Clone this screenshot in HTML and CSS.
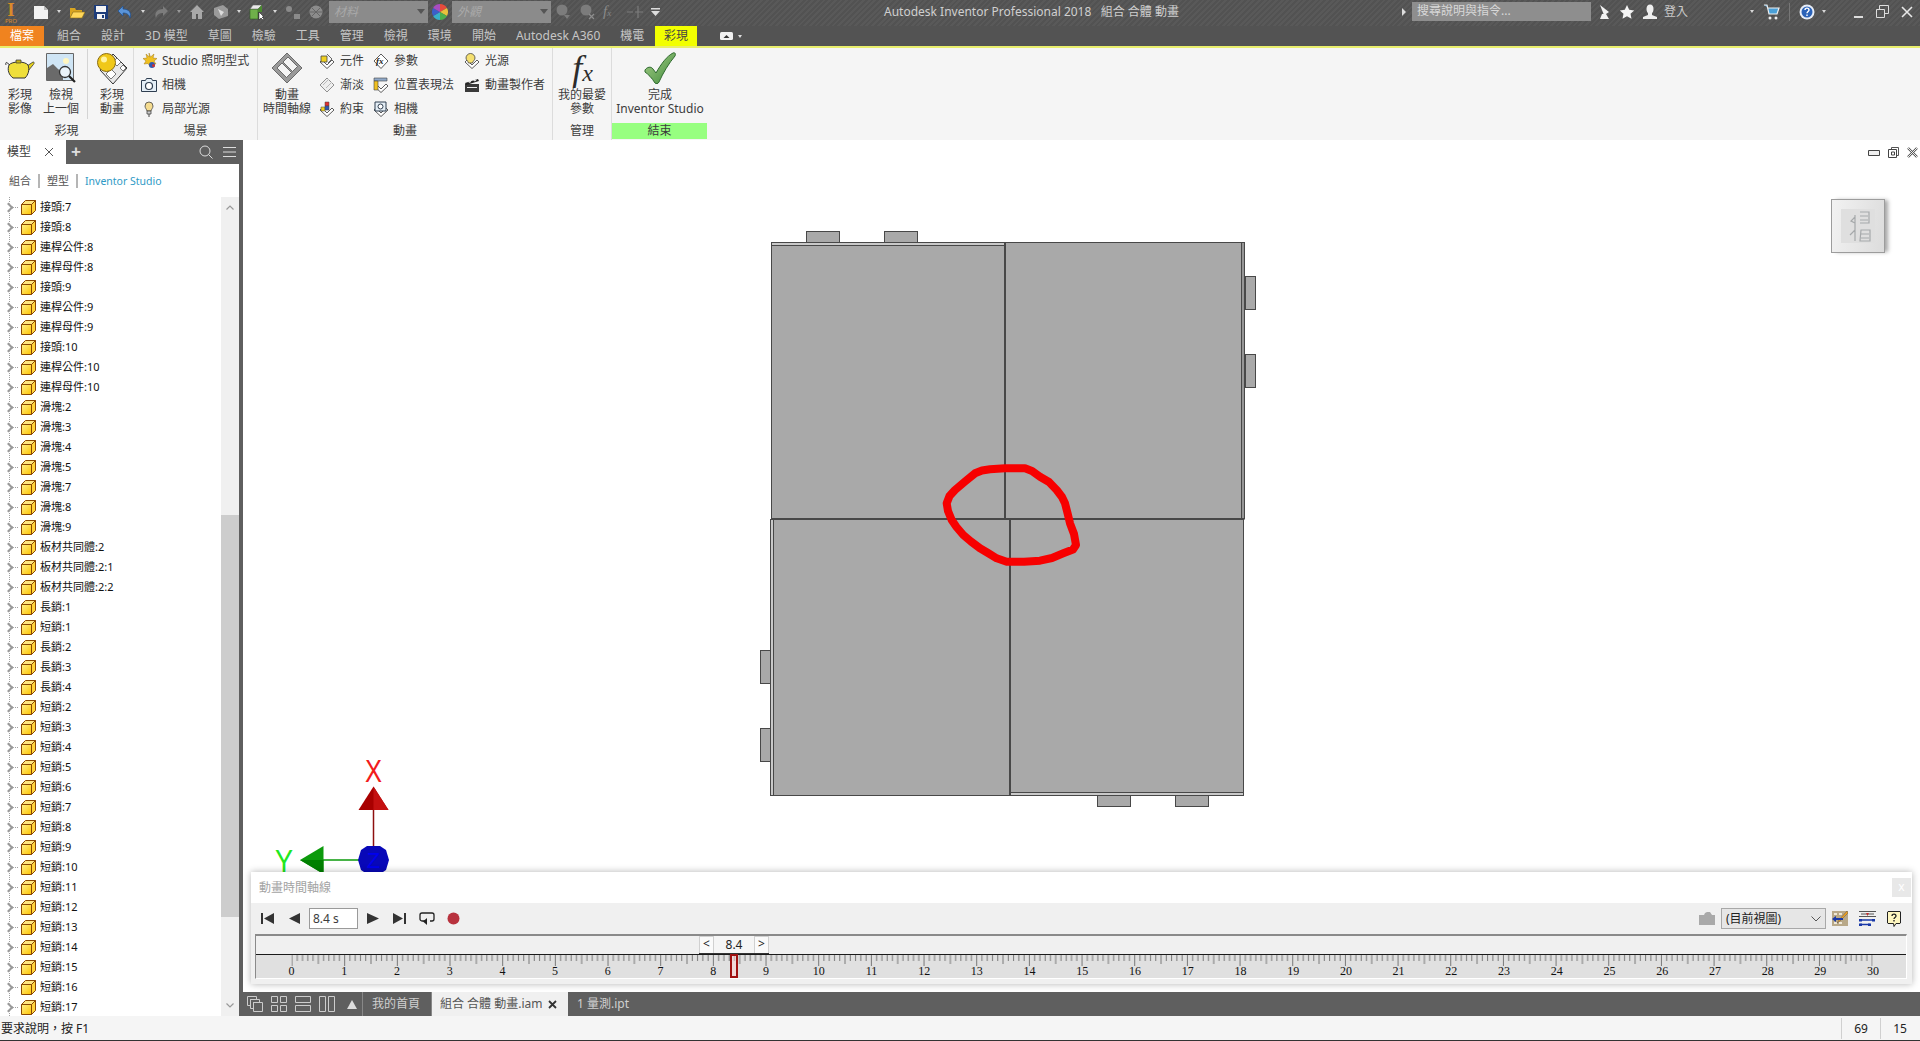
FILE: index.html
```html
<!DOCTYPE html>
<html lang="zh-Hant">
<head>
    <meta charset="UTF-8">
    <title>Autodesk Inventor Professional 2018</title>
    <link rel="stylesheet" href="styles.css">
</head>
<body>

    <svg class="defs" width="0" height="0">
        <defs>
            <linearGradient id="partFront" x1="0" y1="0" x2="1" y2="1">
                <stop offset="0" stop-color="#fff08a"/>
                <stop offset="1" stop-color="#ffc400"/>
            </linearGradient>
            <symbol id="part" viewBox="0 0 16 16">
                <path d="M1.5 5.5h10v10h-10z" fill="url(#partFront)" stroke="#8a4600"/>
                <path d="M1.5 5.5l4-4h10l-4 4z" fill="#ffe680" stroke="#8a4600"/>
                <path d="M11.5 5.5l4-4v10l-4 4z" fill="#ffd23c" stroke="#8a4600"/>
            </symbol>
            <symbol id="tag" viewBox="0 0 16 16">
                <path d="M8 15.5L1 9l2-2 5 5 5-5 2 2z" fill="#fff" stroke="#333" stroke-width=".8"/>
            </symbol>
        </defs>
    </svg>

    <header class="titlebar">
        <div class="logo"><span class="logo-i">I</span><span class="logo-pro">PRO</span></div>
        <div class="qat">
            <svg class="qat-icon" viewBox="0 0 16 16"><path d="M1 2h10l4 4v9H1z" fill="#f2f2f2"/><path d="M11 2v4h4z" fill="#bbb"/></svg>
            <i class="arrow"></i>
            <svg class="qat-icon" viewBox="0 0 16 16"><path d="M1 4h5l1 2h6v2H4L1 14z" fill="#d9a520"/><path d="M4 8h12l-3 6H1z" fill="#ffd75a" stroke="#8a6a10" stroke-width=".6"/></svg>
            <svg class="qat-icon" viewBox="0 0 16 16"><path d="M1 1h14v14H1z" fill="#1d3c7a"/><path d="M3 2h10v6H3z" fill="#f4f4f4"/><path d="M4 10h8v5H4z" fill="#f4f4f4"/><path d="M9 11h2v3H9z" fill="#1d3c7a"/></svg>
            <svg class="qat-icon" viewBox="0 0 16 16"><path d="M6 2L1 7l5 5V9c3 0 6 1 7 5 2-5-1-9-7-9z" fill="#5a94d8" stroke="#1c4f90" stroke-width=".7"/></svg>
            <i class="arrow"></i>
            <svg class="qat-icon" viewBox="0 0 16 16"><path d="M10 2l5 5-5 5V9c-3 0-6 1-7 5-2-5 1-9 7-9z" fill="#7c7c7c"/></svg>
            <i class="arrow arrow-dim"></i>
            <svg class="qat-icon" viewBox="0 0 16 16"><path d="M8 1l7 7h-2v7H9v-5H7v5H3V8H1z" fill="#a8a8a8"/></svg>
            <svg class="qat-icon" viewBox="0 0 16 16"><path d="M1 4l9-3 5 4v7l-9 3-5-4z" fill="#9a9a9a"/><path d="M5 5l6 3-3 4z" fill="#dcdcdc"/></svg>
            <i class="arrow"></i>
            <svg class="qat-icon" viewBox="0 0 16 16"><path d="M1 5h8v10H1z" fill="#6fb04a" stroke="#2d5f20" stroke-width=".6"/><path d="M1 5l3-4h9L9 5z" fill="#e9e9e9" stroke="#555" stroke-width=".5"/><path d="M9 5l4-4v7H9z" fill="#4b8a30"/><path d="M10 8v8l2-2 2 2 1-1-2-2h2z" fill="#fff" stroke="#111" stroke-width=".5"/></svg>
            <i class="arrow"></i>
            <svg class="qat-icon" viewBox="0 0 16 16"><circle cx="4" cy="5" r="3" fill="#8a8a8a"/><path d="M9 10h6v5H9z" fill="#8a8a8a"/></svg>
            <svg class="qat-icon" viewBox="0 0 16 16"><circle cx="7" cy="8" r="6.500" fill="#8c8c8c"/><path d="M3 4l8 8M11 4l-8 8M1 8h12" stroke="#666"/></svg>
            <div class="combo">材料<i class="arrow arrow-dark"></i></div>
            <svg class="qat-icon wheel" viewBox="0 0 16 16"><path d="M8 8V0a8 8 0 0 1 6.9 4z" fill="#e84b3c"/><path d="M8 8l6.9-4a8 8 0 0 1 0 8z" fill="#e8c23c"/><path d="M8 8l6.9 4A8 8 0 0 1 8 16z" fill="#4cae4c"/><path d="M8 8v8a8 8 0 0 1-6.900-4z" fill="#38b0c8"/><path d="M8 8l-6.900 4a8 8 0 0 1 0-8z" fill="#3b5fc8"/><path d="M8 8L1.100 4A8 8 0 0 1 8 0z" fill="#a84cc0"/></svg>
            <div class="combo">外觀<i class="arrow arrow-dark"></i></div>
            <svg class="qat-icon" viewBox="0 0 16 16"><circle cx="7" cy="6" r="5.500" fill="#7c7c7c"/><path d="M9 11h6l-3 4z" fill="#7c7c7c"/></svg>
            <svg class="qat-icon" viewBox="0 0 16 16"><circle cx="7" cy="6" r="5.500" fill="#7c7c7c"/><path d="M10 10l5 5M15 10l-5 5" stroke="#8e8e8e" stroke-width="1.200"/></svg>
            <span class="qat-fx">f<small>x</small></span>
            <svg class="qat-icon" viewBox="0 0 16 16"><path d="M0 8h6M11 2v12M8 8h8" stroke="#7c7c7c" stroke-width="1.200"/></svg>
            <svg class="qat-more" viewBox="0 0 9 8"><path d="M0 0h9v1.500H0zM0 3h9L4.500 8z" fill="#ddd"/></svg>
        </div>
        <div class="app-title">Autodesk Inventor Professional 2018&nbsp;&nbsp; 組合 合體 動畫</div>
        <div class="title-right">
            <i class="arrow-right"></i>
            <div class="search">搜尋說明與指令...</div>
            <svg class="qat-icon" viewBox="0 0 16 16"><path d="M4 1l9 7-3 2-2 1z" fill="#f2f2f2"/><path d="M6 10l-2 5h9l-3-5z" fill="#f2f2f2"/></svg>
            <svg class="qat-icon" viewBox="0 0 16 16"><path d="M8 1l2.200 4.800 5 .6-3.700 3.400 1 5L8 12.300 3.500 14.800l1-5L.8 6.400l5-.6z" fill="#f4f4f4"/></svg>
            <svg class="qat-icon" viewBox="0 0 16 16"><ellipse cx="8" cy="5" rx="3.500" ry="4.500" fill="#eee"/><path d="M6 9h4v2l5 2v2H1v-2l5-2z" fill="#eee"/></svg>
            <span class="signin">登入</span>
            <i class="arrow arrow-signin"></i>
            <svg class="qat-icon" viewBox="0 0 16 16"><path d="M0 1h3l2 9h8l2-6H4" fill="#4aa0d8" stroke="#eee" stroke-width="1.200"/><circle cx="6" cy="14" r="1.500" fill="#eee"/><circle cx="12" cy="14" r="1.500" fill="#eee"/></svg>
            <i class="title-sep"></i>
            <svg class="qat-icon" viewBox="0 0 16 16"><circle cx="8" cy="8" r="7.500" fill="#e8eef8"/><circle cx="8" cy="8" r="5.500" fill="#2a62b8"/><path d="M6 6c0-2.500 4-2.500 4 0 0 1.500-2 1.500-2 3.300" fill="none" stroke="#fff" stroke-width="1.400"/><path d="M7.300 10.500h1.400V12H7.300z" fill="#fff"/></svg>
            <i class="arrow arrow-help"></i>
            <div class="window-btns">
                <svg width="10" height="12" viewBox="0 0 10 12"><path d="M0 10h9v2H0z" fill="#ddd"/></svg>
                <svg width="13" height="13" viewBox="0 0 13 13"><path d="M.5 4.500h8v8h-8zM3.500 4.500v-4h9v8h-4" fill="none" stroke="#ddd"/></svg>
                <svg width="12" height="12" viewBox="0 0 12 12"><path d="M1 1l10 10M11 1L1 11" stroke="#e8e8e8" stroke-width="1.600"/></svg>
            </div>
        </div>
    </header>

    <nav class="tabbar">
        <a class="tab-file">檔案</a>
        <div class="tabs">
            <a>組合</a><a>設計</a><a>3D 模型</a><a>草圖</a><a>檢驗</a><a>工具</a><a>管理</a><a>檢視</a><a>環境</a><a>開始</a><a>Autodesk A360</a><a>機電</a>
        </div>
        <a class="tab-render">彩現</a>
        <svg class="tab-extra" viewBox="0 0 22 8"><rect width="13" height="8" rx="1.500" fill="#f0f0f0"/><path d="M3.500 6l3-3 3 3z" fill="#333"/><path d="M18 3h4l-2 3z" fill="#ddd"/></svg>
    </nav>

    <section class="ribbon">
        <div class="panel panel-render">
            <div class="panel-body">
                <div class="big-btn">
                    <div class="big-icon"><svg width="30" height="22" viewBox="0 0 30 22"><path d="M5 9C2 4 0 5 1 8" fill="none" stroke="#333" stroke-width="1"/><path d="M22 9l6-4c2 0 1 2 0 3l-5 6z" fill="#e6d21c" stroke="#333" stroke-width=".8"/><path d="M4 8c3-4 16-4 19 0 2 5 0 10-3 13H8C4 18 2 13 4 8z" fill="#efdf3a" stroke="#333"/><path d="M11 3h5v3h-5z" fill="#c7b51a" stroke="#333" stroke-width=".7"/></svg></div>
                    <span>彩現<br>影像</span>
                </div>
                <div class="big-btn">
                    <div class="big-icon"><svg width="30" height="30" viewBox="0 0 30 30"><path d="M.5.500h27v27H.5z" fill="#cfe5f5" stroke="#666"/><circle cx="20" cy="8" r="3" fill="#fff6c0"/><path d="M1 27V15l6-4 5 5 5 4v7z" fill="#6a6a6a"/><circle cx="19" cy="19" r="5.500" fill="#e9f3fa" stroke="#333" stroke-width="1.300"/><path d="M23 23l6 6" stroke="#222" stroke-width="2.200"/></svg></div>
                    <span>檢視<br>上一個</span>
                </div>
                <i class="panel-sep"></i>
                <div class="big-btn">
                    <div class="big-icon"><svg width="30" height="31" viewBox="0 0 30 31"><path d="M16 1l14 14-14 16L3 17z" fill="#e8e8e8" stroke="#333"/><path d="M9 21l5 5 5-5-5-5zM16 9l4 4 4-4-4-4zM23 15l3 3 3-3-3-3z" fill="#fff" stroke="#444" stroke-width=".7"/><circle cx="9.500" cy="9.500" r="9" fill="#f0c818" stroke="#8a6c10"/><circle cx="7" cy="6.500" r="3" fill="#fff3a0"/></svg></div>
                    <span>彩現<br>動畫</span>
                </div>
            </div>
            <div class="panel-label">彩現</div>
        </div>

        <div class="panel panel-scene">
            <div class="panel-body">
                <div class="small-col">
                    <div class="small-btn">
                        <svg width="16" height="16" viewBox="0 0 16 16"><path d="M8 0l1.500 4L13 1l-1 4 4 .5-3 2.500 2 3-4-.5-2 3-2-3-4 .5 2-3-3-2.500 4-.5-1-4 3.500 3z" fill="#f0c020" stroke="#a47a10" stroke-width=".5"/><circle cx="11" cy="12" r="3" fill="#3058b0"/><circle cx="12.500" cy="12.500" r="1.500" fill="#d03030"/></svg>
                        Studio 照明型式
                    </div>
                    <div class="small-btn">
                        <svg width="16" height="16" viewBox="0 0 16 16"><path d="M.5 3.500h4l1-2h5l1 2h4v11H.5z" fill="#e4eef6" stroke="#2f3e50"/><circle cx="8" cy="9" r="3.500" fill="#fff" stroke="#2f3e50" stroke-width="1.200"/></svg>
                        相機
                    </div>
                    <div class="small-btn">
                        <svg width="16" height="16" viewBox="0 0 16 16"><path d="M4 5a4 4 0 0 1 8 0c0 2-1.500 3-2 5H6c-.5-2-2-3-2-5z" fill="#f5dc90" stroke="#444" stroke-width=".8"/><path d="M6 10h4v3H6z" fill="#ccc" stroke="#444" stroke-width=".8"/><path d="M7.500 13h1v3h-1z" fill="#444"/></svg>
                        局部光源
                    </div>
                </div>
            </div>
            <div class="panel-label">場景</div>
        </div>

        <div class="panel panel-anim">
            <div class="panel-body">
                <div class="big-btn big-timeline">
                    <div class="big-icon"><svg width="30" height="30" viewBox="0 0 30 30"><path d="M15 0l15 15-15 15L0 15z" fill="#9a9a9a" stroke="#444" stroke-width=".7"/><path d="M16 4l9.500 9.500-5 5L11 9zM10 10l9.500 9.500-5 5L5 15z" fill="#f4f4f4" stroke="#444" stroke-width=".7"/></svg></div>
                    <span>動畫<br>時間軸線</span>
                </div>
                <div class="small-col col-part">
                    <div class="small-btn">
                        <svg width="16" height="16" viewBox="0 0 16 16"><use href="#tag"/><path d="M2 3h6v6H2z" fill="#f0d020" stroke="#444" stroke-width=".8"/><path d="M8 1l5 5-4 4" fill="none" stroke="#444" stroke-width=".8"/></svg>
                        元件
                    </div>
                    <div class="small-btn">
                        <svg width="16" height="16" viewBox="0 0 16 16"><path d="M8 15L1 8l7-7 7 7z" fill="#eee" stroke="#777" stroke-width=".8"/><path d="M4 8l6-6M7 11l6-6" stroke="#bbb"/></svg>
                        漸淡
                    </div>
                    <div class="small-btn">
                        <svg width="16" height="16" viewBox="0 0 16 16"><use href="#tag"/><path d="M6 1h4v4H6z" fill="#e03030" stroke="#444" stroke-width=".5"/><path d="M2 6h4v4H2z" fill="#f0d020" stroke="#444" stroke-width=".5"/><path d="M6 5h4v4H6z" fill="#3058b0" stroke="#444" stroke-width=".5"/></svg>
                        約束
                    </div>
                </div>
                <div class="small-col col-param">
                    <div class="small-btn">
                        <svg width="16" height="16" viewBox="0 0 16 16"><path d="M8 15.500L1 8l7-7 7 7z" fill="#fff" stroke="#333" stroke-width=".8"/><text x="3" y="11" class="icon-fx">fx</text></svg>
                        參數
                    </div>
                    <div class="small-btn">
                        <svg width="16" height="16" viewBox="0 0 16 16"><use href="#tag"/><path d="M1 1h13v3H1z" fill="#8fa8c8" stroke="#444" stroke-width=".6"/><path d="M1 4h4v9H1z" fill="#f0c020" stroke="#444" stroke-width=".6"/></svg>
                        位置表現法
                    </div>
                    <div class="small-btn">
                        <svg width="16" height="16" viewBox="0 0 16 16"><use href="#tag"/><path d="M2 1h11v9H2z" fill="#e4eef6" stroke="#2f3e50"/><circle cx="7.500" cy="5.500" r="2.500" fill="#fff" stroke="#2f3e50"/></svg>
                        相機
                    </div>
                </div>
                <div class="small-col col-light">
                    <div class="small-btn">
                        <svg width="16" height="16" viewBox="0 0 16 16"><use href="#tag"/><path d="M2 5a4.500 4.500 0 0 1 9 0c0 2-2 3-2.500 5h-4C4 8 2 7 2 5z" fill="#f5e070" stroke="#444" stroke-width=".8"/></svg>
                        光源
                    </div>
                    <div class="small-btn">
                        <svg width="16" height="16" viewBox="0 0 16 16"><path d="M1 7h14v8H1z" fill="#3a3a3a"/><path d="M1 6l13-4 1 2L2 8z" fill="#222"/><path d="M4 5l2 1 2-3-2 1zM9 3.500l2 1 2-2-2 .5zM3 10h10v1H3z" fill="#eee"/></svg>
                        動畫製作者
                    </div>
                </div>
            </div>
            <div class="panel-label">動畫</div>
        </div>

        <div class="panel panel-manage">
            <div class="panel-body">
                <div class="big-btn big-wide">
                    <div class="big-icon big-fx"><span>f</span><span class="fx-x">x</span></div>
                    <span>我的最愛<br>參數</span>
                </div>
            </div>
            <div class="panel-label">管理</div>
        </div>

        <div class="panel panel-finish">
            <div class="panel-body">
                <div class="big-btn big-wide">
                    <div class="big-icon">
                        <svg width="32" height="32" viewBox="0 0 32 32">
                            <defs><linearGradient id="checkFill" x1="0" y1="0" x2="1" y2="1"><stop offset="0" stop-color="#a9d08a"/><stop offset="1" stop-color="#3f8a3a"/></linearGradient></defs>
                            <path d="M1 18c2-3 6-4 8-1l3 4C17 12 23 4 29 1c2-1 3 1 2 3-6 7-12 17-16 26-1 2-3 2-4 1-3-5-7-9-10-11z" fill="url(#checkFill)" stroke="#2f6a2f"/>
                        </svg>
                    </div>
                    <span>完成<br>Inventor Studio</span>
                </div>
            </div>
            <div class="panel-label label-finish">結束</div>
        </div>
        <div class="ribbon-rest"></div>
    </section>

    <div class="workspace">
        <aside class="browser">
            <div class="browser-head">
                <div class="browser-title">模型 <svg width="10" height="10" viewBox="0 0 10 10"><path d="M1 1l8 8M9 1L1 9" stroke="#555"/></svg></div>
                <div class="browser-bar">
                    <span class="browser-plus">+</span>
                    <svg class="browser-search" width="14" height="14" viewBox="0 0 14 14"><circle cx="6" cy="6" r="5" fill="none" stroke="#ddd"/><path d="M9.500 9.500l4 4" stroke="#ddd"/></svg>
                    <svg width="13" height="10" viewBox="0 0 13 10"><path d="M0 .5h13M0 5h13M0 9.500h13" stroke="#ddd"/></svg>
                </div>
            </div>
            <div class="browser-sub">
                <span>組合</span><i></i><span>塑型</span><i></i><span class="sub-active">Inventor Studio</span>
            </div>
            <div class="browser-tree">
                <ul class="tree">
                    <li><svg class="part"><use href="#part"/></svg>接頭:7</li>
                    <li><svg class="part"><use href="#part"/></svg>接頭:8</li>
                    <li><svg class="part"><use href="#part"/></svg>連桿公件:8</li>
                    <li><svg class="part"><use href="#part"/></svg>連桿母件:8</li>
                    <li><svg class="part"><use href="#part"/></svg>接頭:9</li>
                    <li><svg class="part"><use href="#part"/></svg>連桿公件:9</li>
                    <li><svg class="part"><use href="#part"/></svg>連桿母件:9</li>
                    <li><svg class="part"><use href="#part"/></svg>接頭:10</li>
                    <li><svg class="part"><use href="#part"/></svg>連桿公件:10</li>
                    <li><svg class="part"><use href="#part"/></svg>連桿母件:10</li>
                    <li><svg class="part"><use href="#part"/></svg>滑塊:2</li>
                    <li><svg class="part"><use href="#part"/></svg>滑塊:3</li>
                    <li><svg class="part"><use href="#part"/></svg>滑塊:4</li>
                    <li><svg class="part"><use href="#part"/></svg>滑塊:5</li>
                    <li><svg class="part"><use href="#part"/></svg>滑塊:7</li>
                    <li><svg class="part"><use href="#part"/></svg>滑塊:8</li>
                    <li><svg class="part"><use href="#part"/></svg>滑塊:9</li>
                    <li><svg class="part"><use href="#part"/></svg>板材共同體:2</li>
                    <li><svg class="part"><use href="#part"/></svg>板材共同體:2:1</li>
                    <li><svg class="part"><use href="#part"/></svg>板材共同體:2:2</li>
                    <li><svg class="part"><use href="#part"/></svg>長銷:1</li>
                    <li><svg class="part"><use href="#part"/></svg>短銷:1</li>
                    <li><svg class="part"><use href="#part"/></svg>長銷:2</li>
                    <li><svg class="part"><use href="#part"/></svg>長銷:3</li>
                    <li><svg class="part"><use href="#part"/></svg>長銷:4</li>
                    <li><svg class="part"><use href="#part"/></svg>短銷:2</li>
                    <li><svg class="part"><use href="#part"/></svg>短銷:3</li>
                    <li><svg class="part"><use href="#part"/></svg>短銷:4</li>
                    <li><svg class="part"><use href="#part"/></svg>短銷:5</li>
                    <li><svg class="part"><use href="#part"/></svg>短銷:6</li>
                    <li><svg class="part"><use href="#part"/></svg>短銷:7</li>
                    <li><svg class="part"><use href="#part"/></svg>短銷:8</li>
                    <li><svg class="part"><use href="#part"/></svg>短銷:9</li>
                    <li><svg class="part"><use href="#part"/></svg>短銷:10</li>
                    <li><svg class="part"><use href="#part"/></svg>短銷:11</li>
                    <li><svg class="part"><use href="#part"/></svg>短銷:12</li>
                    <li><svg class="part"><use href="#part"/></svg>短銷:13</li>
                    <li><svg class="part"><use href="#part"/></svg>短銷:14</li>
                    <li><svg class="part"><use href="#part"/></svg>短銷:15</li>
                    <li><svg class="part"><use href="#part"/></svg>短銷:16</li>
                    <li><svg class="part"><use href="#part"/></svg>短銷:17</li>
                </ul>
                <div class="scrollbar">
                    <svg class="scroll-arrow" width="8" height="5" viewBox="0 0 8 5"><path d="M.5 4.500L4 1l3.500 3.500" fill="none" stroke="#999" stroke-width="1.200"/></svg>
                    <div class="scroll-thumb"></div>
                    <svg class="scroll-arrow scroll-down" width="8" height="5" viewBox="0 0 8 5"><path d="M.5.500L4 4 7.500.500" fill="none" stroke="#999" stroke-width="1.200"/></svg>
                </div>
            </div>
        </aside>

        <main class="main">
            <div class="canvas">
                <svg class="scene" viewBox="243 140 1677 852">
                    <g class="model">
                        <rect x="806.500" y="231.500" width="33" height="11"/>
                        <rect x="884.500" y="231.500" width="33" height="11"/>
                        <rect x="1245.500" y="276.500" width="10" height="33"/>
                        <rect x="1245.500" y="354.500" width="10" height="33"/>
                        <rect x="760.500" y="650.500" width="10" height="33"/>
                        <rect x="760.500" y="728.500" width="10" height="33"/>
                        <rect x="1097.500" y="795.500" width="33" height="11"/>
                        <rect x="1175.500" y="795.500" width="33" height="11"/>
                        <rect class="strip-light" x="771.500" y="242.500" width="234" height="3"/>
                        <rect x="771.500" y="245.500" width="234" height="273.500"/>
                        <rect class="strip-dark" x="1241.500" y="242.500" width="3" height="276.500"/>
                        <rect x="1005.500" y="242.500" width="236" height="276.500"/>
                        <rect class="strip-light" x="770.500" y="519.500" width="3" height="276"/>
                        <rect x="773.500" y="519.500" width="236" height="276"/>
                        <rect class="strip-light" x="1010.500" y="792.500" width="233" height="3"/>
                        <rect x="1010.500" y="519.500" width="233" height="273"/>
                        <path class="seam" d="M771 519h473M1005 243v276M1010 519v276"/>
                    </g>
                    <path class="markup" d="M1005 468.300L1025 468.300 1032 471 1040 476.700 1049 482 1056.700 490 1062 497 1065 503.300 1067.500 513 1070 523.300 1074 534 1076 545 1073 549.500 1063.300 553.300 1052 558 1040 560.700 1024 561.700 1006.700 561.700 996.700 558.300 988 553 980 548.300 971 541.500 963.300 535 956.500 527 951.700 520 948 511 946.700 503.300 949.500 496 955 490 965 481.500 975 473.300 982 470.500 990 469.300z"/>
                    <g class="triad">
                        <line x1="373.500" y1="808" x2="373.500" y2="850" stroke="#8e1010" stroke-width="1.500"/>
                        <line x1="320" y1="860" x2="362" y2="860" stroke="#0a9a0a" stroke-width="1.500"/>
                        <path d="M373.500 786.500L388.500 810h-30z" fill="#a80000"/>
                        <path d="M373.500 786.500L388.500 810h-15z" fill="#c41010"/>
                        <path d="M300 860l23.500-14v28z" fill="#0c9a0c"/>
                        <path d="M300 860l23.500 14v-14z" fill="#008000"/>
                        <path d="M367 846h13l6 4 3 10-3 10-6 4h-13l-6-4-3-10 3-10z" fill="#0808b8"/>
                        <text x="373.500" y="868" class="triad-z">Z</text>
                        <text x="373.500" y="782" class="triad-x" textLength="17" lengthAdjust="spacingAndGlyphs">X</text>
                        <text x="284" y="872" class="triad-y" textLength="18" lengthAdjust="spacingAndGlyphs">Y</text>
                    </g>
                </svg>

                <div class="canvas-btns">
                    <svg width="12" height="6" viewBox="0 0 12 6"><path d="M.5.500h11v5H.5z" fill="#f0f0f0" stroke="#444"/></svg>
                    <svg width="11" height="11" viewBox="0 0 11 11"><path d="M3.500 2.500v-2h7v8h-2" fill="none" stroke="#555"/><path d="M.5 2.500h8v8h-8z" fill="#fff" stroke="#444"/><path d="M3.500 5h3v3h-3z" fill="none" stroke="#444"/></svg>
                    <svg width="11" height="11" viewBox="0 0 11 11"><path d="M1 1l9 9M10 1l-9 9" stroke="#555" stroke-width="2.400"/><path d="M1 1l9 9M10 1l-9 9" stroke="#eee"/></svg>
                </div>

                <div class="nav-box">
                    <svg class="nav-glyph" width="34" height="34" viewBox="0 0 34 34"><path d="M0 0h34v34H0z" fill="#dfdfdf"/><path d="M19 3h9v11h-9M19 7h8M19 11h8M20 21h9v11H19zM20 25h8M20 29h8M14 8l-4 4 4 2M14 21l-5 5M14 6v26" fill="none" stroke="#a6a9ab" stroke-width="1.200"/></svg>
                </div>

                <section class="timeline">
                    <div class="tl-head">
                        <span>動畫時間軸線</span>
                        <span class="tl-close">x</span>
                    </div>
                    <div class="tl-controls">
                        <svg width="13" height="11" viewBox="0 0 13 11"><path d="M0 0h2v11H0zM13 0v11L3 5.500z" fill="#333"/></svg>
                        <svg class="tl-prev" width="11" height="11" viewBox="0 0 11 11"><path d="M11 0v11L0 5.500z" fill="#333"/></svg>
                        <div class="tl-input">8.4 s</div>
                        <svg class="tl-play" width="12" height="11" viewBox="0 0 12 11"><path d="M0 0v11l12-5.500z" fill="#333"/></svg>
                        <svg class="tl-end" width="13" height="11" viewBox="0 0 13 11"><path d="M0 0v11l10-5.500zM11 0h2v11h-2z" fill="#333"/></svg>
                        <svg class="tl-loop" width="16" height="13" viewBox="0 0 16 13"><path d="M6 9H3a2 2 0 0 1-2-2V3a2 2 0 0 1 2-2h10a2 2 0 0 1 2 2v4a2 2 0 0 1-2 2h-2" fill="none" stroke="#222" stroke-width="1.300"/><path d="M8 6v7l-4-3.500z" fill="#222"/></svg>
                        <svg class="tl-rec" width="13" height="13" viewBox="0 0 13 13"><circle cx="6.500" cy="6.500" r="6" fill="#b8323e"/></svg>
                        <div class="tl-right">
                            <svg width="16" height="13" viewBox="0 0 16 13"><path d="M0 3h5l1-2 2-1h3l2 3h3v10H0z" fill="#a9a9a9"/></svg>
                            <div class="tl-select">(目前視圖)<svg width="10" height="6" viewBox="0 0 10 6"><path d="M.5.500L5 5 9.500.500" fill="none" stroke="#555"/></svg></div>
                            <svg width="16" height="15" viewBox="0 0 16 15"><path d="M0 0h16v15H0z" fill="#b8a888"/><path d="M2 2h3v2H2zM7 2h3v2H7zM2 11h3v2H2zM7 11h3v2H7z" fill="#efe8d8"/><path d="M15 0L7 9l-2 3 3-2 8-8z" fill="#f0a020" stroke="#444" stroke-width=".4"/><path d="M0 8l4-3v2h7v2H4v2z" fill="#1838a8"/></svg>
                            <svg class="tl-spaced" width="17" height="15" viewBox="0 0 17 15"><path d="M0 .5h17M2 3h13M0 5.500h17" stroke="#555"/><path d="M7 2h3l-1.500 3z" fill="#c03030"/><path d="M1 9h15M1 13.500h10" stroke="#1838a8" stroke-width="1.300"/><path d="M0 8h3v2.500H0zM13 8h3v2.500h-3zM0 12.500h3V15H0zM9 12.500h3V15H9z" fill="#1838a8"/></svg>
                            <svg class="tl-spaced" width="14" height="16" viewBox="0 0 14 16"><path d="M1 .5h12a.7.7 0 0 1 .5.500v11l-.5.500H9l-2 3-.5-3H1l-.5-.5V1z" fill="#fff7c0" stroke="#222"/><path d="M5 5c0-2.500 4-2.500 4 0 0 1.500-2 1.500-2 3" fill="none" stroke="#222" stroke-width="1.300"/><path d="M6.300 9h1.400v1.400H6.300z" fill="#222"/></svg>
                        </div>
                    </div>
                    <div class="ruler">
                        <div class="ruler-top">
                            <div class="ruler-pop"><span class="pop-btn">&lt;</span><span class="pop-val">8.4</span><span class="pop-btn">&gt;</span></div>
                        </div>
                        <div class="ruler-band">
                            <svg class="ruler-ticks" width="1650" height="12">
                                <defs>
                                    <pattern id="ticks" x="35.500" y="0" width="52.670" height="12" patternUnits="userSpaceOnUse">
                                        <path d="M.5 0v11M5.770 0v6M11.030 0v6M16.300 0v6M21.570 0v6M26.830 0v9M32.100 0v6M37.370 0v6M42.630 0v6M47.900 0v6" stroke="#777" stroke-width="1" fill="none"/>
                                    </pattern>
                                </defs>
                                <rect x="35.500" width="1581" height="12" fill="url(#ticks)"/>
                            </svg>
                            <div class="ruler-nums">
                                <span>0</span><span>1</span><span>2</span><span>3</span><span>4</span><span>5</span><span>6</span><span>7</span><span>8</span><span>9</span><span>10</span><span>11</span><span>12</span><span>13</span><span>14</span><span>15</span><span>16</span><span>17</span><span>18</span><span>19</span><span>20</span><span>21</span><span>22</span><span>23</span><span>24</span><span>25</span><span>26</span><span>27</span><span>28</span><span>29</span><span>30</span>
                            </div>
                        </div>
                        <div class="playhead"></div>
                    </div>
                </section>
            </div>

            <div class="docbar">
                <div class="doc-icons">
                    <svg width="16" height="16" viewBox="0 0 16 16"><path d="M.5.500h9v3h-6v6h-3zM3.500 3.500h9v3h-6v6h-3zM6.500 6.500h9v9h-9z" fill="none" stroke="#ccc"/></svg>
                    <svg width="16" height="16" viewBox="0 0 16 16"><path d="M.5.500h6v6h-6zM9.500.500h6v6h-6zM.5 9.500h6v6h-6zM9.500 9.500h6v6h-6z" fill="none" stroke="#ccc"/></svg>
                    <svg width="16" height="16" viewBox="0 0 16 16"><path d="M.5.500h15v6H.5zM.5 9.500h15v6H.5z" fill="none" stroke="#ccc"/></svg>
                    <svg width="16" height="16" viewBox="0 0 16 16"><path d="M.5.500h6v15h-6zM9.500.500h6v15h-6z" fill="none" stroke="#ccc"/></svg>
                    <svg class="doc-up" width="10" height="9" viewBox="0 0 10 9"><path d="M5 0l5 9H0z" fill="#ddd"/></svg>
                </div>
                <a class="doc-tab doc-home">我的首頁</a>
                <a class="doc-tab doc-active">組合 合體 動畫.iam<svg width="9" height="9" viewBox="0 0 9 9"><path d="M1 1l7 7M8 1L1 8" stroke="#333" stroke-width="1.800"/></svg></a>
                <a class="doc-tab">1 量測.ipt</a>
            </div>
        </main>
    </div>

    <footer class="statusbar">
        <span class="status-text">要求說明，按 F1</span>
        <span class="status-cell">69</span>
        <span class="status-cell">15</span>
    </footer>

</body>
</html>
```

FILE: styles.css
```css
* {
    box-sizing: border-box;
}

html, body {
    margin: 0;
    height: 100%;
    overflow: hidden;
}

body {
    display: flex;
    flex-direction: column;
    width: 1920px;
    height: 1041px;
    font-family: "Noto Sans", "Noto Sans CJK TC", sans-serif;
    font-size: 12px;
    line-height: 14px;
    color: #3c3c3c;
    background-color: #fff;
}

svg {
    display: block;
    flex: none;
}

.defs {
    position: absolute;
}

/* Title bar */
.titlebar {
    display: flex;
    align-items: center;
    height: 26px;
    flex: none;
    padding-bottom: 3px;
    background-color: #535353;
    background-image: repeating-linear-gradient(135deg, #525252 0 2px, #595959 2px 4px);
}

.logo {
    display: flex;
    flex-direction: column;
    align-items: center;
    width: 12px;
    margin: 2px 0 0 5px;
    color: #d98a2a;
}

.logo-i {
    font: bold 19px/16px "Liberation Serif", serif;
}

.logo-pro {
    font-size: 6px;
    line-height: 6px;
}

.qat {
    display: flex;
    align-items: center;
    gap: 8px;
    margin-left: 16px;
}

.qat-icon {
    width: 16px;
    height: 16px;
}

.arrow {
    display: block;
    flex: none;
    width: 0;
    height: 0;
    border-left: 2.5px solid transparent;
    border-right: 2.5px solid transparent;
    border-top: 3px solid #d8d8d8;
}

.arrow-dim {
    border-top-color: #999;
}

.arrow-dark {
    border-top-color: #555;
    border-left-width: 4px;
    border-right-width: 4px;
    border-top-width: 5px;
}

.combo {
    display: flex;
    align-items: center;
    justify-content: space-between;
    width: 99px;
    height: 22px;
    margin: 0 -4px;
    padding: 0 3px 0 5px;
    background-color: #8b8b8b;
    color: #a9a9a9;
    font-style: italic;
}

.qat-fx {
    width: 16px;
    font: italic 15px/16px "Liberation Serif", serif;
    color: #8a8a8a;
}

.qat-fx small {
    font-size: 9px;
}

.qat-more {
    width: 9px;
    height: 8px;
}

.app-title {
    margin-left: 224px;
    color: #cfcfcf;
    font-size: 12px;
    white-space: nowrap;
}

.title-right {
    display: flex;
    align-items: center;
    margin-left: auto;
}

.arrow-right {
    width: 0;
    height: 0;
    margin-right: 6px;
    border-top: 4px solid transparent;
    border-bottom: 4px solid transparent;
    border-left: 4px solid #ddd;
}

.search {
    width: 179px;
    height: 19px;
    margin-right: 5px;
    padding: 2px 5px;
    background-color: #8e8e8e;
    color: #d8d8d8;
}

.title-right > .qat-icon {
    margin-right: 7px;
}

.signin {
    width: 86px;
    margin-left: -1px;
    color: #c9c9c9;
}

.arrow-signin {
    margin-right: 10px;
}

.title-sep {
    width: 1px;
    height: 18px;
    margin: 0 9px 0 2px;
    background-color: #777;
}

.window-btns {
    display: flex;
    align-items: center;
    gap: 12px;
    margin: 0 7px 0 28px;
}

/* Tab row */
.tabbar {
    display: flex;
    height: 20px;
    flex: none;
    background-color: #535353;
    line-height: 20px;
}

.tab-file {
    width: 44px;
    background-color: #f0831f;
    color: #fff;
    text-align: center;
}

.tabs {
    display: flex;
    gap: 20px;
    width: 611px;
    padding-left: 13px;
    color: #c6c6c6;
    white-space: nowrap;
}

.tab-render {
    width: 42px;
    background-color: #f2ff00;
    color: #444;
    text-align: center;
}

.tab-extra {
    width: 22px;
    height: 8px;
    margin: 6px 0 0 23px;
}

/* Ribbon */
.ribbon {
    display: flex;
    height: 94px;
    flex: none;
    border-top: 2px solid #e9ee6c;
    background-color: #f5f5f5;
}

.panel {
    display: flex;
    flex-direction: column;
    flex: none;
    border-right: 1px solid #dcdcdc;
}

.panel-render {
    width: 134px;
}

.panel-scene {
    width: 124px;
}

.panel-anim {
    width: 295px;
}

.panel-manage {
    width: 59px;
}

.panel-finish {
    width: 96px;
    border-right: 0;
}

.panel-body {
    display: flex;
    height: 75px;
    flex: none;
}

.panel-label {
    height: 16px;
    line-height: 16px;
    text-align: center;
}

.label-finish {
    margin-right: 1px;
    background-color: #97ff80;
}

.big-btn {
    display: flex;
    flex-direction: column;
    align-items: center;
    width: 40px;
    margin-right: 1px;
    padding-top: 4px;
    text-align: center;
    white-space: nowrap;
}

.big-wide {
    flex: 1;
    margin: 0;
}

.big-timeline {
    width: 58px;
    margin: 0;
}

.big-icon {
    display: flex;
    align-items: center;
    justify-content: center;
    height: 32px;
    margin-bottom: 4px;
}

.big-fx {
    padding-left: 1px;
    font: italic 36px/32px "Liberation Serif", serif;
    color: #2c2c2c;
}

.fx-x {
    font-size: 24px;
    margin-top: 10px;
}

.panel-sep {
    width: 1px;
    height: 70px;
    margin: 1px 4px 0 5px;
    background-color: #d4d4d4;
}

.small-col {
    display: flex;
    flex-direction: column;
    padding: 1px 0 0 7px;
}

.small-btn {
    display: flex;
    align-items: center;
    gap: 5px;
    height: 24px;
    white-space: nowrap;
}

.col-part {
    width: 57px;
    padding-left: 3px;
}

.col-param {
    width: 91px;
    padding-left: 0;
}

.col-light {
    padding-left: 0;
}

.icon-fx {
    font: italic bold 9px "Liberation Serif", serif;
    fill: #222;
}

.ribbon-rest {
    flex: 1;
}

/* Model browser */
.workspace {
    display: flex;
    flex: 1;
    min-height: 0;
}

.browser {
    display: flex;
    flex-direction: column;
    flex: none;
    width: 243px;
    border-right: 4px solid #5f5f5f;
    background-color: #fff;
}

.browser-head {
    display: flex;
    height: 24px;
    flex: none;
}

.browser-title {
    display: flex;
    align-items: center;
    gap: 13px;
    width: 66px;
    padding-left: 7px;
}

.browser-bar {
    display: flex;
    flex: 1;
    align-items: center;
    padding: 0 3px 0 5px;
    background-color: #5f5f5f;
    color: #ddd;
}

.browser-plus {
    font: bold 17px/20px "Liberation Sans", sans-serif;
}

.browser-search {
    margin: 0 10px 0 auto;
}

.browser-sub {
    display: flex;
    align-items: center;
    gap: 7px;
    height: 33px;
    flex: none;
    padding-left: 9px;
    font-size: 11px;
    color: #555;
}

.browser-sub i {
    width: 2px;
    height: 14px;
    background-color: #b5b5b5;
}

.sub-active {
    font-size: 10.5px;
    color: #2f9ac6;
}

.browser-tree {
    display: flex;
    flex: 1;
    min-height: 0;
    overflow: hidden;
}

.tree {
    flex: 1;
    margin: 0;
    padding: 0;
    list-style: none;
    font-size: 11px;
    color: #111;
}

.tree li {
    display: flex;
    align-items: center;
    height: 20px;
    padding-left: 6px;
    background-image:
        repeating-linear-gradient(#a0a0a0 0 1px, transparent 1px 2px),
        repeating-linear-gradient(90deg, #a0a0a0 0 1px, transparent 1px 2px);
    background-size: 1px 100%, 5px 1px;
    background-position: 9px 0, 13px 10px;
    background-repeat: no-repeat;
}

.tree li::before {
    content: "";
    flex: none;
    width: 5px;
    height: 5px;
    margin-left: -1px;
    background-color: #fff;
    border-top: 2px solid #9a9a9a;
    border-right: 2px solid #9a9a9a;
    transform: rotate(45deg);
}

.part {
    width: 16px;
    height: 16px;
    margin: 0 4px 0 8px;
}

.scrollbar {
    display: flex;
    flex-direction: column;
    align-items: center;
    flex: none;
    width: 18px;
    background-color: #f0f0f0;
}

.scroll-arrow {
    margin-top: 8px;
}

.scroll-thumb {
    width: 100%;
    height: 402px;
    margin-top: 305px;
    background-color: #cdcdcd;
}

.scroll-down {
    margin-top: 86px;
}

/* Canvas */
.main {
    display: flex;
    flex-direction: column;
    flex: 1;
    min-width: 0;
}

.canvas {
    position: relative;
    flex: 1;
    background-color: #fff;
}

.scene {
    position: absolute;
    left: 0;
    top: 0;
    width: 100%;
    height: 100%;
}

.model rect {
    fill: #a9a9a9;
    stroke: #484848;
    stroke-width: 1;
}

.model .strip-light {
    fill: #c9c9c9;
}

.model .strip-dark {
    fill: #969696;
}

.seam {
    fill: none;
    stroke: #484848;
    stroke-width: 2;
}

.markup {
    fill: none;
    stroke: #f70000;
    stroke-width: 8;
    stroke-linejoin: round;
}

.triad text {
    font-family: "Liberation Sans", sans-serif;
    text-anchor: middle;
}

.triad-x {
    font-size: 32px;
    fill: #f21c1c;
}

.triad-y {
    font-size: 32px;
    fill: #20e820;
}

.triad-z {
    font-size: 22px;
    fill: #0000ee;
}

.canvas-btns {
    position: absolute;
    top: 7px;
    right: 2px;
    display: flex;
    align-items: center;
    gap: 8px;
}

.nav-box {
    position: absolute;
    left: 1588px;
    top: 59px;
    width: 54px;
    height: 54px;
    padding: 9px 0 0 9px;
    border: 1px solid #9c9c9c;
    background: linear-gradient(100deg, #f2f2f2, #dcdcdc);
    box-shadow: 4px 0 4px -1px rgba(0, 0, 0, 0.35);
}

/* Animation timeline */
.timeline {
    position: absolute;
    left: 8px;
    right: 8px;
    top: 732px;
    height: 112px;
    background-color: #f0f0f0;
    box-shadow: 0 0 7px rgba(0, 0, 0, 0.3);
}

.tl-head {
    display: flex;
    align-items: center;
    justify-content: space-between;
    height: 31px;
    padding: 0 1px 0 8px;
    background-color: #fff;
    color: #a3a3a3;
}

.tl-close {
    width: 19px;
    height: 19px;
    background-color: #e8e8e8;
    color: #fff;
    line-height: 18px;
    text-align: center;
}

.tl-controls {
    display: flex;
    align-items: center;
    height: 31px;
    padding: 0 10px;
}

.tl-prev {
    margin-left: 15px;
}

.tl-input {
    width: 49px;
    height: 21px;
    margin-left: 9px;
    padding-left: 3px;
    border: 1px solid #9a9a9a;
    background-color: #fff;
    line-height: 19px;
}

.tl-play {
    margin-left: 9px;
}

.tl-end {
    margin-left: 14px;
}

.tl-loop {
    margin-left: 13px;
}

.tl-rec {
    margin-left: 12px;
}

.tl-right {
    display: flex;
    align-items: center;
    gap: 6px;
    margin-left: auto;
    padding-right: 1px;
}

.tl-spaced {
    margin-left: 5px;
}

.tl-select {
    display: flex;
    align-items: center;
    justify-content: space-between;
    width: 105px;
    height: 21px;
    padding: 0 4px;
    border: 1px solid #a8a8a8;
    background-color: #e6e6e6;
    color: #222;
}

.ruler {
    position: relative;
    display: flex;
    flex-direction: column;
    height: 45px;
    margin: 0 5px 0 4px;
    border-top: 2px solid #8a8a8a;
    border-left: 1px solid #8a8a8a;
    border-right: 1px solid #fff;
    border-bottom: 1px solid #fff;
}

.ruler-top {
    height: 18px;
    flex: none;
}

.ruler-pop {
    display: flex;
    width: 70px;
    height: 18px;
    margin-left: 443px;
    background-color: #f5f5f5;
    border-bottom: 1px solid #333;
    color: #222;
    text-align: center;
}

.pop-btn {
    width: 15px;
    border: 1px solid #d0d0d0;
    border-bottom: 0;
    background-color: #fafafa;
    line-height: 14px;
}

.pop-val {
    flex: 1;
    line-height: 17px;
}

.ruler-band {
    flex: 1;
    border-top: 1px solid #1a1a1a;
    background-color: #e0e0e0;
}

.ruler-nums {
    display: flex;
    margin: -3px 0 0 9.17px;
    font: 12px/14px "Liberation Serif", serif;
    color: #111;
}

.ruler-nums span {
    flex: none;
    width: 52.73px;
    text-align: center;
}

.playhead {
    position: absolute;
    left: 474px;
    top: 18px;
    width: 8px;
    height: 24px;
    border: 2px solid #a01010;
    background-color: rgba(255, 210, 210, 0.5);
}

/* Document tabs */
.docbar {
    display: flex;
    align-items: stretch;
    height: 24px;
    flex: none;
    background-color: #5f5f5f;
    color: #d0d0d0;
    line-height: 24px;
}

.doc-icons {
    display: flex;
    align-items: center;
    gap: 8px;
    width: 120px;
    padding-left: 4px;
    border-right: 1px solid #888;
}

.doc-up {
    margin-left: 4px;
}

.doc-tab {
    padding: 0 9px;
    white-space: nowrap;
}

.doc-home {
    width: 69px;
    padding: 0 0 0 9px;
    border-right: 1px solid #888;
}

.doc-active {
    display: flex;
    align-items: center;
    justify-content: space-between;
    width: 136px;
    padding: 0 11px 0 8px;
    background-color: #f0f0f0;
    color: #555;
}

/* Status bar */
.statusbar {
    display: flex;
    align-items: stretch;
    height: 25px;
    flex: none;
    padding: 2px 1px 1px 1px;
    border-bottom: 1px solid #333;
    background-color: #f5f5f5;
    color: #222;
    line-height: 21px;
}

.status-text {
    flex: 1;
}

.status-cell {
    width: 39px;
    border-left: 1px solid #d0d0d0;
    text-align: center;
}
```
